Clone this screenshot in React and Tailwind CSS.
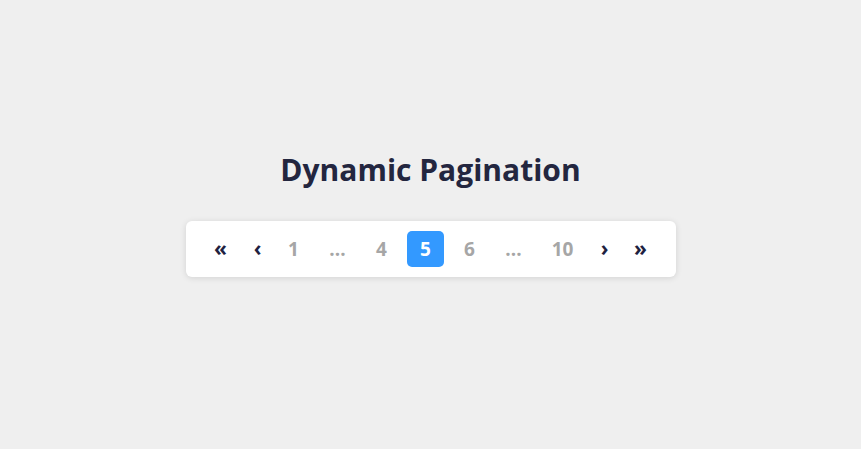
import React from "react";

const items = [
  { label: "«", w: "w-[39px]", kind: "arrow" },
  { label: "‹", w: "w-[21px]", kind: "arrow" },
  { label: "1", w: "w-[37px]", kind: "page" },
  { label: "...", w: "w-[37px]", kind: "dots" },
  { label: "4", w: "w-[37px]", kind: "page" },
  { label: "5", w: "w-[37px]", kind: "active" },
  { label: "6", w: "w-[37px]", kind: "page" },
  { label: "...", w: "w-[37px]", kind: "dots" },
  { label: "10", w: "w-[47px]", kind: "page" },
  { label: "›", w: "w-[23px]", kind: "arrow" },
  { label: "»", w: "w-[35px]", kind: "arrow" },
];

function Pagination() {
  return (
    <div className="flex justify-center items-center bg-white rounded-md shadow-[0_1px_6px_rgba(0,0,0,0.12)] w-[490px] h-[56px]">
      <div className="flex items-center gap-[7px] mr-[2px]">
        {items.map((it, i) => {
          let cls = "text-[#a6a6a6] text-[19px]";
          if (it.kind === "arrow") cls = "text-[#1e2140] text-[21px]";
          if (it.kind === "active") cls = "bg-[#3399ff] text-white rounded-[5px] text-[19px]";
          return (
            <span
              key={i}
              className={`flex items-center justify-center h-[36px] font-bold ${it.w} ${cls}`}
            >
              {it.label}
            </span>
          );
        })}
      </div>
    </div>
  );
}

export default function App() {
  return (
    <div
      className="min-h-screen bg-[#efefef] flex flex-col items-center pt-[146px]"
      style={{ fontFamily: '"Open Sans", "Noto Sans", sans-serif' }}
    >
      <h1 className="text-[30px] font-bold text-[#23263f] leading-[48px]">
        Dynamic Pagination
      </h1>
      <div className="mt-[27px]">
        <Pagination />
      </div>
    </div>
  );
}
